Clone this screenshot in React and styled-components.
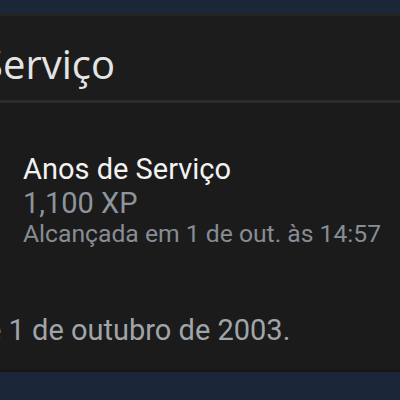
import React from "react";
import styled, { createGlobalStyle } from "styled-components";

const Global = createGlobalStyle`
  html, body { margin: 0; padding: 0; background: #1b1b1b; }
  body { width: 400px; height: 400px; overflow: hidden; font-family: Roboto, "Noto Sans", sans-serif; }
`;

const Page = styled.div`
  width: 400px;
  height: 400px;
  display: flex;
  flex-direction: column;
  overflow: hidden;
`;

const NavBar = styled.div`
  height: 14px;
  background: #1c2639;
  border-bottom: 2px solid #26231f;
  box-shadow: 0 1px 0 #141414;
  flex: none;
`;

const Header = styled.header`
  height: 84px;
  background: #1c1c1c;
  display: flex;
  align-items: center;
  overflow: hidden;
  flex: none;
  border-bottom: 3px solid #2b2b2b;
`;

const HeaderTitle = styled.h1`
  margin: 0 0 0 -19px;
  font-family: "Open Sans", sans-serif;
  font-weight: 400;
  font-size: 40px;
  color: #e4e4e4;
  white-space: nowrap;
  line-height: 1;
  padding-top: 12px;
`;

const Body = styled.main`
  flex: 1;
  background: #1b1b1b;
  padding-top: 49px;
  overflow: hidden;
  border-bottom: 2px solid #151515;
`;

const Item = styled.div`
  padding-left: 23px;
  display: flex;
  flex-direction: column;
`;

const Line = styled.div`
  font-size: ${(p) => p.$size}px;
  line-height: ${(p) => p.$lh}px;
  color: ${(p) => p.$color};
  white-space: nowrap;
`;

const Note = styled.p`
  margin: 65px 0 0 -14px;
  font-size: 29px;
  line-height: 34px;
  color: #a0a5aa;
  white-space: nowrap;
`;

const Footer = styled.div`
  height: 28px;
  background: #1c2639;
  flex: none;
`;

export default function App() {
  return (
    <Page>
      <Global />
      <NavBar />
      <Header>
        <HeaderTitle>Serviço</HeaderTitle>
      </Header>
      <Body>
        <Item>
          <Line $size={29} $lh={34} $color="#f2f2f2">Anos de Serviço</Line>
          <Line $size={29} $lh={34} $color="#8e949b">1,100 XP</Line>
          <Line $size={24.7} $lh={28} $color="#878d94">Alcançada em 1 de out. às 14:57</Line>
        </Item>
        <Note>e 1 de outubro de 2003.</Note>
      </Body>
      <Footer />
    </Page>
  );
}
